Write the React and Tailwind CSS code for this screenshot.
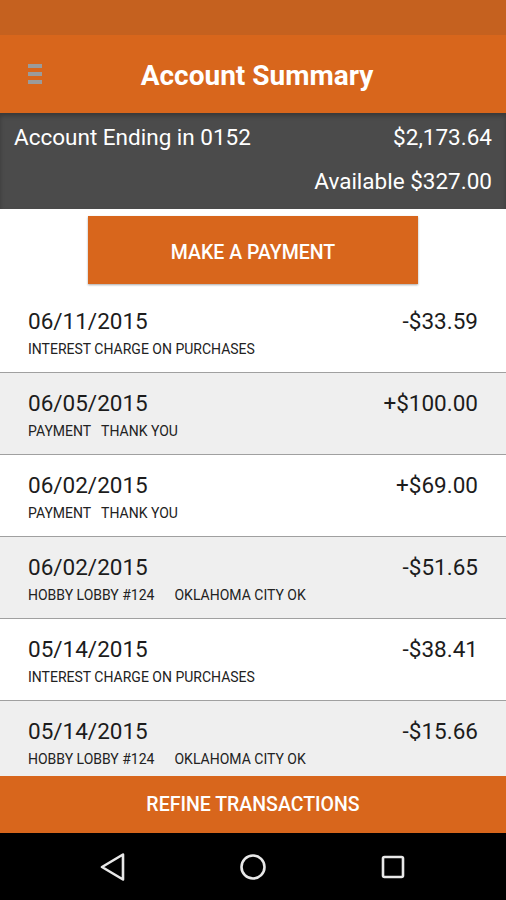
const ROWS = [
  { date: '06/11/2015', amount: '-$33.59', desc: ['INTEREST CHARGE ON PURCHASES'] },
  { date: '06/05/2015', amount: '+$100.00', desc: ['PAYMENT', 'THANK YOU'] },
  { date: '06/02/2015', amount: '+$69.00', desc: ['PAYMENT', 'THANK YOU'] },
  { date: '06/02/2015', amount: '-$51.65', desc: ['HOBBY LOBBY #124', 'OKLAHOMA CITY OK'] },
  { date: '05/14/2015', amount: '-$38.41', desc: ['INTEREST CHARGE ON PURCHASES'] },
  { date: '05/14/2015', amount: '-$15.66', desc: ['HOBBY LOBBY #124', 'OKLAHOMA CITY OK'] },
]

function Row({ row, shaded }) {
  const wide = row.desc[0].startsWith('HOBBY')
  return (
    <div className={`h-[82px] shrink-0 border-b border-[#a0a0a0] px-[28px] pt-[16px] ${shaded ? 'bg-[#efefef]' : 'bg-white'}`}>
      <div className="flex items-baseline justify-between text-[22.5px] leading-[28px] text-[#1c1c1c]">
        <span>{row.date}</span>
        <span>{row.amount}</span>
      </div>
      <div className="mt-[5px] flex text-[14px] leading-[18px] text-[#222]">
        {row.desc.map((d, i) => (
          <span key={i} className={i > 0 ? (wide ? 'ml-[20px]' : 'ml-[10px]') : ''}>{d}</span>
        ))}
      </div>
    </div>
  )
}

export default function App() {
  return (
    <div className="flex h-[900px] w-[506px] flex-col overflow-hidden bg-white font-['Roboto',sans-serif]">
      {/* status bar */}
      <div className="h-[35px] shrink-0 bg-[#c5611f]" />

      {/* toolbar */}
      <div className="grid h-[78px] shrink-0 grid-cols-[56px_1fr_56px] items-center bg-[#d8661c]">
        <div className="ml-[28px] flex w-[14px] flex-col gap-[4px]">
          <div className="h-[4px] bg-[#9b9b9b]" />
          <div className="h-[4px] bg-[#9b9b9b]" />
          <div className="h-[4px] bg-[#9b9b9b]" />
        </div>
        <h1 className="pt-[3px] pl-[8px] text-center text-[28px] font-bold text-white">Account Summary</h1>
        <div />
      </div>

      {/* account band */}
      <div className="h-[96px] shrink-0 bg-[#4b4b4b] px-[14px] pt-[10px] text-[22.5px] leading-[28px] text-white shadow-[inset_0_3px_4px_rgba(0,0,0,0.25)]">
        <div className="flex justify-between">
          <span>Account Ending in 0152</span>
          <span>$2,173.64</span>
        </div>
        <div className="mt-[16px] text-right">Available $327.00</div>
      </div>

      {/* make a payment */}
      <div className="flex shrink-0 justify-center pt-[7px] pb-[7px]">
        <button className="h-[68px] w-[330px] bg-[#d8661c] pt-[6px] text-[19.5px] font-medium text-white shadow-[0_1px_2px_rgba(0,0,0,0.35)]">
          MAKE A PAYMENT
        </button>
      </div>

      {/* transactions */}
      <div className="flex min-h-0 flex-1 flex-col overflow-hidden">
        {ROWS.map((r, i) => (
          <Row key={i} row={r} shaded={i % 2 === 1} />
        ))}
      </div>

      {/* refine */}
      <div className="flex h-[57px] shrink-0 items-center justify-center bg-[#d8661c] text-[19.5px] font-medium text-white">
        REFINE TRANSACTIONS
      </div>

      {/* nav bar */}
      <div className="flex h-[67px] shrink-0 items-center justify-center gap-[112px] bg-black">
        <svg width="28" height="28" viewBox="0 0 28 28" fill="none" stroke="#e8e8e8" strokeWidth="2.6" strokeLinejoin="round">
          <path d="M24 1.5 L3 14 L24 26.5 Z" />
        </svg>
        <svg width="28" height="28" viewBox="0 0 28 28" fill="none" stroke="#e8e8e8" strokeWidth="2.6">
          <circle cx="14" cy="14" r="11.5" />
        </svg>
        <svg width="28" height="28" viewBox="0 0 28 28" fill="none" stroke="#e8e8e8" strokeWidth="2.6">
          <rect x="4" y="4" width="20" height="20" rx="1.5" />
        </svg>
      </div>
    </div>
  )
}
